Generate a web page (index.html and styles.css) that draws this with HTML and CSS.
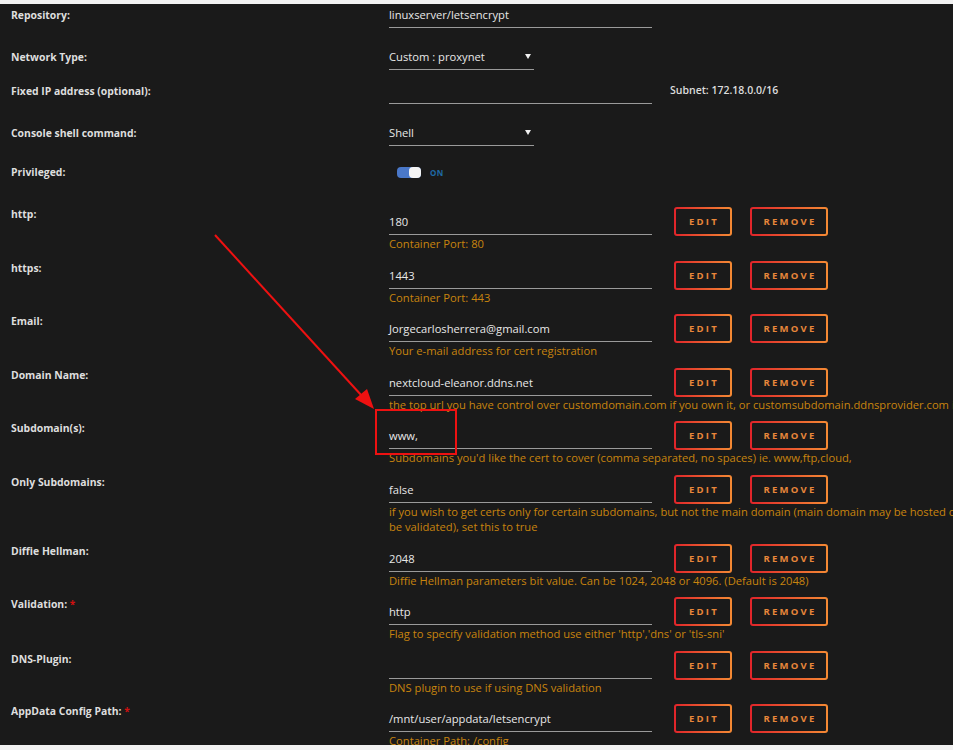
FILE: index.html
```html
<!DOCTYPE html>
<html>
<head>
<meta charset="utf-8">
<link rel="stylesheet" href="styles.css">
</head>
<body>
<div class="page">
  <div class="panel">
    <div class="row top h42">
      <div class="label">Repository:</div>
      <div class="field"><div class="input">linuxserver/letsencrypt</div></div>
    </div>
    <div class="row top h34">
      <div class="label">Network Type:</div>
      <div class="field"><div class="select"><span>Custom : proxynet</span><svg class="caret" width="6" height="5" viewBox="0 0 6 5"><path d="M0 0H6L3 5Z" fill="#f0f0f0"/></svg></div></div>
    </div>
    <div class="row top h42">
      <div class="label">Fixed IP address (optional):</div>
      <div class="field fixed"><div class="input"></div><div class="subnet">Subnet: 172.18.0.0/16</div></div>
    </div>
    <div class="row top h39">
      <div class="label">Console shell command:</div>
      <div class="field"><div class="select"><span>Shell</span><svg class="caret" width="6" height="5" viewBox="0 0 6 5"><path d="M0 0H6L3 5Z" fill="#f0f0f0"/></svg></div></div>
    </div>
    <div class="row top h45">
      <div class="label">Privileged:</div>
      <div class="field"><div class="switch"><span class="track"><span class="knob"></span></span><span class="on">ON</span></div></div>
    </div>

    <div class="row cfg">
      <div class="label">http:</div>
      <div class="field">
        <div class="line"><div class="input">180</div><span class="btn edit">EDIT</span><span class="btn remove">REMOVE</span></div>
        <div class="hint">Container Port: 80</div>
      </div>
    </div>
    <div class="row cfg">
      <div class="label">https:</div>
      <div class="field">
        <div class="line"><div class="input">1443</div><span class="btn edit">EDIT</span><span class="btn remove">REMOVE</span></div>
        <div class="hint">Container Port: 443</div>
      </div>
    </div>
    <div class="row cfg">
      <div class="label">Email:</div>
      <div class="field">
        <div class="line"><div class="input">Jorgecarlosherrera@gmail.com</div><span class="btn edit">EDIT</span><span class="btn remove">REMOVE</span></div>
        <div class="hint">Your e-mail address for cert registration</div>
      </div>
    </div>
    <div class="row cfg">
      <div class="label">Domain Name:</div>
      <div class="field">
        <div class="line"><div class="input">nextcloud-eleanor.ddns.net</div><span class="btn edit">EDIT</span><span class="btn remove">REMOVE</span></div>
        <div class="hint">the top url you have control over customdomain.com if you own it, or customsubdomain.ddnsprovider.com if u</div>
      </div>
    </div>
    <div class="row cfg">
      <div class="label">Subdomain(s):</div>
      <div class="field">
        <div class="line"><div class="input">www,</div><span class="btn edit">EDIT</span><span class="btn remove">REMOVE</span></div>
        <div class="hint">Subdomains you'd like the cert to cover (comma separated, no spaces) ie. www,ftp,cloud,</div>
      </div>
    </div>
    <div class="row cfg">
      <div class="label">Only Subdomains:</div>
      <div class="field">
        <div class="line"><div class="input">false</div><span class="btn edit">EDIT</span><span class="btn remove">REMOVE</span></div>
        <div class="hint">if you wish to get certs only for certain subdomains, but not the main domain (main domain may be hosted on<br>be validated), set this to true</div>
      </div>
    </div>
    <div class="row cfg">
      <div class="label">Diffie Hellman:</div>
      <div class="field">
        <div class="line"><div class="input">2048</div><span class="btn edit">EDIT</span><span class="btn remove">REMOVE</span></div>
        <div class="hint">Diffie Hellman parameters bit value. Can be 1024, 2048 or 4096. (Default is 2048)</div>
      </div>
    </div>
    <div class="row cfg">
      <div class="label">Validation: <span class="req">*</span></div>
      <div class="field">
        <div class="line"><div class="input">http</div><span class="btn edit">EDIT</span><span class="btn remove">REMOVE</span></div>
        <div class="hint">Flag to specify validation method use either 'http','dns' or 'tls-sni'</div>
      </div>
    </div>
    <div class="row cfg">
      <div class="label dns">DNS-Plugin:</div>
      <div class="field">
        <div class="line"><div class="input"></div><span class="btn edit">EDIT</span><span class="btn remove">REMOVE</span></div>
        <div class="hint">DNS plugin to use if using DNS validation</div>
      </div>
    </div>
    <div class="row cfg">
      <div class="label">AppData Config Path: <span class="req">*</span></div>
      <div class="field">
        <div class="line"><div class="input">/mnt/user/appdata/letsencrypt</div><span class="btn edit">EDIT</span><span class="btn remove">REMOVE</span></div>
        <div class="hint">Container Path: /config</div>
      </div>
    </div>
  </div>

  <svg class="annot" width="953" height="750" viewBox="0 0 953 750">
    <line x1="215" y1="235" x2="362" y2="396" stroke="#ee1111" stroke-width="2"/>
    <path d="M374 409 L355 399 L367 389 Z" fill="#ee1111"/>
    <rect x="376" y="410" width="80" height="44" fill="none" stroke="#ee1111" stroke-width="2"/>
  </svg>
</div>
</body>
</html>
```

FILE: styles.css
```css
html, body {
  margin: 0;
  padding: 0;
  overflow: hidden;
  background: #f2f2f2;
}

.page {
  position: relative;
  width: 953px;
  height: 750px;
  overflow: hidden;
}

.panel {
  margin-top: 4px;
  height: 741px;
  padding-top: 1px;
  box-sizing: border-box;
  background: #1a1a1a;
  overflow: hidden;
  font-family: "Open Sans", "Liberation Sans", sans-serif;
  color: #e6e6e6;
}

.row {
  display: grid;
  grid-template-columns: 389px 1fr;
  box-sizing: border-box;
}

.label {
  padding-left: 11px;
  font-size: 10.4px;
  font-weight: 700;
  color: #dedede;
  white-space: nowrap;
}

.top .label { line-height: 20px; }
.h42 { height: 42px; }
.h34 { height: 34px; }
.h39 { height: 39px; }
.h45 { height: 45px; }

.input {
  width: 263px;
  box-sizing: border-box;
  border-bottom: 1px solid #9a9a9a;
  font-size: 11.2px;
  color: #e8e8e8;
  white-space: nowrap;
}

.top .input {
  height: 23px;
  line-height: 20px;
}

.fixed {
  display: flex;
  align-items: flex-start;
}

.subnet {
  margin-left: 18px;
  line-height: 18px;
  font-size: 10.5px;
  font-weight: 600;
  color: #dcdcdc;
}

.select {
  width: 145px;
  height: 23px;
  box-sizing: border-box;
  border-bottom: 1px solid #9a9a9a;
  display: flex;
  justify-content: space-between;
  align-items: flex-start;
  font-size: 11.2px;
  line-height: 20px;
  color: #e8e8e8;
  padding-right: 3px;
}

.caret { margin-top: 7px; }

.switch {
  display: flex;
  align-items: center;
  height: 20px;
  padding-left: 8px;
}

.track {
  width: 24px;
  height: 11px;
  border-radius: 4px;
  background: #4a78c9;
  display: flex;
  justify-content: flex-end;
}

.knob {
  width: 12px;
  height: 11px;
  border-radius: 4px;
  background: #f4f4f4;
}

.on {
  margin-left: 9px;
  font-size: 8px;
  font-weight: 700;
  letter-spacing: 0.5px;
  color: #1f6aa6;
}

.cfg {
  padding-bottom: 9.6px;
}

.cfg .label { line-height: 14px; }
.cfg .label.dns { line-height: 16px; }

.line {
  display: flex;
  align-items: flex-start;
}

.cfg .input {
  height: 28px;
  padding-top: 2px;
  line-height: 25px;
  margin-right: 22px;
}

.btn {
  height: 29px;
  box-sizing: border-box;
  border: 2px solid transparent;
  border-radius: 3px;
  background:
    linear-gradient(#1a1a1a, #1a1a1a) padding-box,
    linear-gradient(90deg, #e0242a, #f48a34) border-box;
  display: flex;
  align-items: center;
  justify-content: center;
  font-size: 9.5px;
  font-weight: 700;
  letter-spacing: 2.2px;
  padding-left: 2px;
  color: #e8873a;
}

.edit { width: 58px; margin-right: 18px; }
.remove { width: 78px; }

.hint {
  line-height: 15px;
  font-size: 11.2px;
  color: #c8840e;
  white-space: nowrap;
}

.req {
  color: #d01010;
  font-size: 10px;
}

.annot {
  position: absolute;
  left: 0;
  top: 0;
  pointer-events: none;
}
```
